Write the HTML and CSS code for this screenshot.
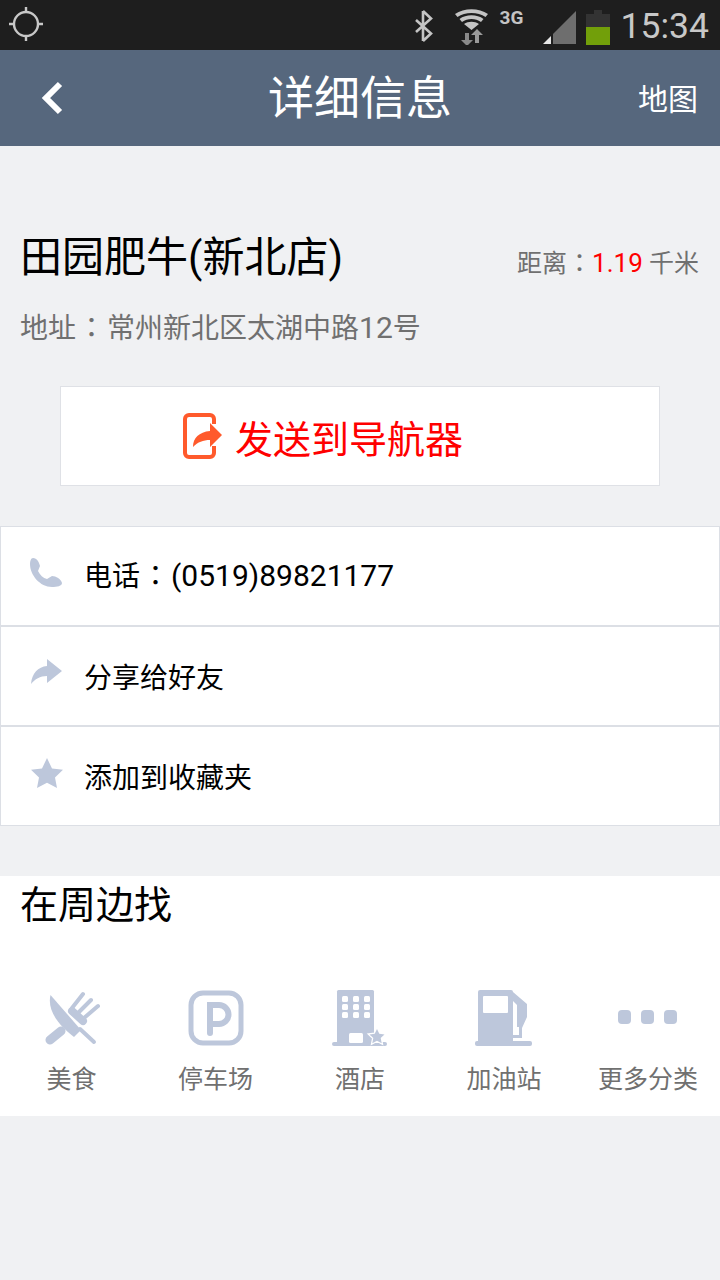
FILE: index.html
```html
<!DOCTYPE html>
<html lang="zh-CN">
<head>
<meta charset="utf-8">
<title>详细信息</title>
<link rel="stylesheet" href="styles.css">
</head>
<body>
<div class="status">
  <svg class="gps" width="36" height="36" viewBox="0 0 36 36"><circle cx="17" cy="17" r="12" fill="none" stroke="#c8c8c8" stroke-width="2.4"/><path d="M17 0v6M17 28v6M0 17h6M28 17h6" stroke="#c8c8c8" stroke-width="2.4"/></svg>
  <div class="status-right">
    <svg class="bt" width="18" height="32" viewBox="0 0 18 32"><path d="M8 1l8 7.500L1 22M8 31l8-7.500L1 10M8 1v30" fill="none" stroke="#c4c4c4" stroke-width="2.600"/></svg>
    <svg class="wifi" width="34" height="36" viewBox="0 0 34 36"><path d="M0 5C9-1.500 24-1.500 33 5l-2.500 3C23 2.500 10 2.500 2.500 8zM4.500 10C11 5 22 5 28.500 10L26 13c-5.500-4-13.500-4-19 0zM9 15c4.500-3 10.500-3 15 0l-7.500 6z" fill="#c4c4c4"/><path d="M10 24h4v7h4l-6 6-6-6h4z" fill="#8a8a8a"/><path d="M20 34v-8h-4l6-6 6 6h-4v8z" fill="#9a9a9a"/></svg>
    <span class="net">3G</span>
    <svg class="signal" width="33" height="33" viewBox="0 0 33 33"><path d="M10 33V23L33 0v33z" fill="#6e6e6e"/><path d="M0 33l8-8v8z" fill="#e6e6e6"/></svg>
    <svg class="battery" width="24" height="35" viewBox="0 0 24 35"><path d="M8 0h8v4h8v31H0V4h8z" fill="#333"/><rect y="17" width="24" height="18" fill="#729f0a"/></svg>
    <span class="clock">15:34</span>
  </div>
</div>

<header class="topbar">
  <svg class="back" width="24" height="36" viewBox="0 0 24 36"><path d="M20 4L6 18l14 14" fill="none" stroke="#fff" stroke-width="6"/></svg>
  <h1 class="title">详细信息</h1>
  <span class="map-link">地图</span>
</header>

<section class="place">
  <div class="name-row">
    <h2 class="name">田园肥牛(新北店)</h2>
    <span class="distance">距离<span class="colon" lang="zh-TW">：</span><em>1.19</em> 千米</span>
  </div>
  <p class="address">地址<span class="colon" lang="zh-TW">：</span>常州新北区太湖中路<span class="digits">12</span>号</p>
</section>

<div class="send">
  <svg width="39" height="46" viewBox="0 0 39 46"><path d="M31 11V6a4 4 0 0 0-4-4H6a4 4 0 0 0-4 4v34a4 4 0 0 0 4 4h21a4 4 0 0 0 4-4v-7" fill="none" stroke="#ff5a2c" stroke-width="4"/><path d="M10 34c0-9 6-15 17-16v-8l12 12-12 12v-7c-7 0-12 2-17 7z" fill="#ff5a2c"/></svg>
  <span>发送到导航器</span>
</div>

<div class="list">
  <div class="row row-phone">
    <svg width="34" height="30" viewBox="0 0 34 30"><path d="M3 0C7 0 9 4 10 8L8 13C10 17 13 20 17 21L22 18C26 18 31 21 32 25C32 28 27 29 22 29C10 29 0 17 0 6C0 3 1 0 3 0z" fill="#bdc7db"/></svg>
    <span>电话<span class="colon" lang="zh-TW">：</span><span class="digits">(0519)89821177</span></span>
  </div>
  <div class="row">
    <svg width="34" height="28" viewBox="0 0 34 28"><path d="M1 25C2 14 8 8 17 7V0l15 12-15 12v-7C10 17 5 20 1 25z" fill="#bdc7db"/></svg>
    <span>分享给好友</span>
  </div>
  <div class="row">
    <svg width="34" height="30" viewBox="0 0 34 30"><path d="M17 0l5 10.500 11 1.300-8 7.700 2 10.500-10-5.300-10 5.300 2-10.500-8-7.700 11-1.300z" fill="#bdc7db"/></svg>
    <span>添加到收藏夹</span>
  </div>
</div>

<section class="nearby">
  <h3 class="nearby-title">在周边找</h3>
  <div class="cats">
    <div class="cat">
      <svg width="56" height="56" viewBox="0 0 56 56">
        <g fill="none" stroke="#bdc7db" stroke-linecap="round">
          <path d="M28 18L39 4M34 23L47 10M40 28L54 16" stroke-width="4"/>
          <path d="M28 21L39 31" stroke-width="8"/>
          <path d="M36 39L50 52" stroke-width="4"/>
          <path d="M17 41L6 50" stroke-width="9"/>
        </g>
        <path d="M6.500 5C3 20 14 35 30 47L37 40z" fill="#bdc7db"/>
      </svg>
      <span>美食</span>
    </div>
    <div class="cat">
      <svg width="56" height="56" viewBox="0 0 56 56"><rect x="3" y="3" width="50" height="50" rx="12" fill="none" stroke="#bdc7db" stroke-width="5"/><path d="M22 43V15h9a9 9 0 0 1 0 19h-9" fill="none" stroke="#bdc7db" stroke-width="6" stroke-linecap="round"/></svg>
      <span>停车场</span>
    </div>
    <div class="cat">
      <svg width="56" height="56" viewBox="0 0 56 56">
        <rect x="5" y="0" width="37" height="54" rx="1.500" fill="#bdc7db"/>
        <rect x="0" y="52" width="55" height="4" rx="2" fill="#bdc7db"/>
        <g fill="#fff">
          <rect x="10" y="6" width="6" height="6" rx="1.500"/><rect x="21" y="6" width="6" height="6" rx="1.500"/><rect x="32" y="6" width="6" height="6" rx="1.500"/>
          <rect x="10" y="14" width="6" height="6" rx="1.500"/><rect x="21" y="14" width="6" height="6" rx="1.500"/><rect x="32" y="14" width="6" height="6" rx="1.500"/>
          <rect x="10" y="22" width="6" height="6" rx="1.500"/><rect x="21" y="22" width="6" height="6" rx="1.500"/><rect x="32" y="22" width="6" height="6" rx="1.500"/>
          <rect x="17" y="43" width="14" height="10" rx="1.500"/>
        </g>
        <path d="M45 39l2.300 4.700 5.200.7-3.800 3.600 1 5.200-4.700-2.500-4.700 2.500 1-5.200-3.800-3.600 5.200-.7z" fill="#bdc7db" stroke="#fff" stroke-width="2.500" paint-order="stroke"/>
      </svg>
      <span>酒店</span>
    </div>
    <div class="cat">
      <svg width="58" height="56" viewBox="0 0 58 56">
        <rect x="3" y="0" width="35" height="54" rx="2" fill="#bdc7db"/>
        <rect x="0" y="51" width="57" height="5" rx="2" fill="#bdc7db"/>
        <rect x="8" y="6" width="25" height="17" rx="1" fill="#fff"/>
        <path d="M38 2L52 14V27L47 38V48H38V45H44V37H42V15L38 11z" fill="#bdc7db"/>
      </svg>
      <span>加油站</span>
    </div>
    <div class="cat">
      <svg width="60" height="56" viewBox="0 0 60 56"><g fill="#bdc7db"><rect x="0" y="20" width="13" height="14" rx="4"/><rect x="23" y="20" width="13" height="14" rx="4"/><rect x="46" y="20" width="13" height="14" rx="4"/></g></svg>
      <span>更多分类</span>
    </div>
  </div>
</section>
</body>
</html>
```

FILE: styles.css
```css
* { box-sizing: border-box; }
html, body { margin: 0; padding: 0; }
body {
  width: 720px;
  height: 1280px;
  overflow: hidden;
  background: #f0f1f3;
  font-family: Roboto, "Noto Sans CJK SC", sans-serif;
  color: #000;
  text-spacing-trim: space-all;
}
h1, h2, h3, p { margin: 0; font-weight: 400; }
.colon { font-family: "Noto Sans CJK TC", sans-serif; line-height: 0; }
.address .colon, .row .colon { padding: 0 1.5px; }
.digits { font-size: 30px; line-height: 0; }

.status {
  height: 50px;
  background: #1e1e1e;
  display: flex;
  align-items: center;
  justify-content: space-between;
  padding: 0 11px 0 9px;
}
.status-right { display: flex; align-items: center; }
.bt { margin-right: 22px; margin-top: 2px; }
.wifi { margin-right: 11px; margin-top: 3px; }
.net { font-size: 19px; font-weight: 700; color: #c4c4c4; width: 43px; margin-top: -14px; line-height: 24px; }
.signal { margin-top: 5px; }
.battery { margin-left: 10px; margin-top: 4px; }
.clock { font-size: 35.5px; color: #c8c8c8; margin-left: 11px; margin-top: 2px; line-height: 50px; }

.topbar {
  height: 96px;
  background: #56677d;
  display: flex;
  align-items: center;
  justify-content: space-between;
  padding: 0 22px 0 40px;
  position: relative;
}
.title {
  position: absolute;
  left: 0;
  right: 0;
  top: 20px;
  text-align: center;
  font-size: 46px;
  line-height: 56px;
  color: #fff;
}
.map-link { font-size: 30px; color: #fff; margin-top: -2px; }

.place { padding: 84px 20px 0; }
.name-row { display: flex; align-items: center; justify-content: space-between; }
.name { font-size: 42px; line-height: 56px; }
.distance { font-size: 25px; color: #707070; margin: 6px 1px 0 0; }
.distance em { font-style: normal; color: #f00; font-size: 26px; }
.address { font-size: 28px; line-height: 40px; color: #707070; margin-top: 23px; }

.send {
  width: 600px;
  height: 100px;
  margin: 37px 0 0 60px;
  background: #fff;
  border: 1px solid #dfe1e6;
  display: flex;
  align-items: center;
  gap: 13px;
  padding-left: 122px;
  font-size: 38px;
  color: #f00;
}

.list { margin-top: 40px; }
.row {
  height: 100px;
  background: #fff;
  border: 1px solid #dcdfe5;
  display: flex;
  align-items: center;
  padding-left: 29px;
  font-size: 28px;
  gap: 20px;
}
.row svg { margin-top: -6px; }
.row-phone > span { margin-top: -4px; }

.nearby { margin-top: 50px; height: 240px; background: #fff; padding-top: 4px; }
.nearby-title { font-size: 38px; line-height: 50px; padding-left: 20px; }
.cats { display: grid; grid-template-columns: 143px 145px 144px 144px 144px; margin-top: 60px; }
.cat { display: flex; flex-direction: column; align-items: center; color: #707070; font-size: 25px; }
.cat span { margin-top: 16px; line-height: 36px; }
```
